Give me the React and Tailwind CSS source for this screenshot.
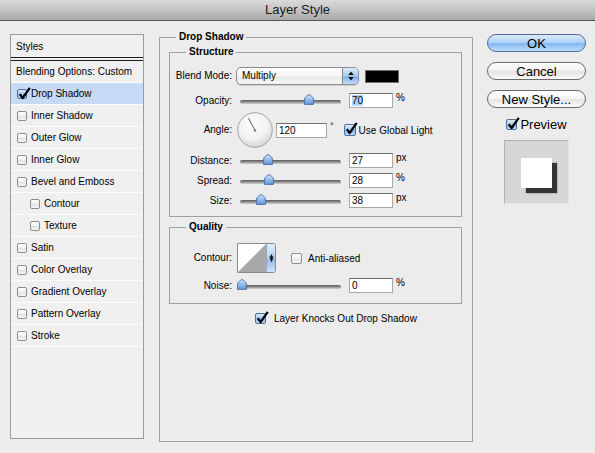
import React from "react";

// Aqua style checkbox; the check mark pokes out past the top-right corner
function Checkbox({ checked = false, className = "w-[10px] h-[10px]" }) {
  return (
    <span
      className={
        "relative inline-block shrink-0 rounded-[2px] border " +
        className +
        (checked
          ? " border-[#4f6f9c] bg-[linear-gradient(to_bottom,#dbe9fb_0%,#a9c9f1_50%,#84b1ea_55%,#bcd8f8_100%)]"
          : " border-[#8d8d8d] bg-[linear-gradient(to_bottom,#ffffff_0%,#f2f2f2_50%,#e2e2e2_55%,#f7f7f7_100%)]")
      }
    >
      {checked && (
        <svg
          className="absolute left-[0px] top-[-3px] w-[13px] h-[13px] overflow-visible"
          viewBox="0 0 13 13"
        >
          <path
            d="M1.8 7.2 L4.6 11 L11.8 0.8"
            fill="none"
            stroke="#000"
            strokeWidth="2.2"
            strokeLinejoin="round"
          />
        </svg>
      )}
    </span>
  );
}

function TextBox({ className = "w-[44px]", children }) {
  return (
    <div
      className={
        "h-[15px] shrink-0 bg-white border border-[#a8a8a8] border-t-[#6e6e6e] pl-[2px] text-[10px] leading-[13px] " +
        className
      }
    >
      {children}
    </div>
  );
}

// Horizontal slider: grooved track with a blue pointed thumb
function Slider({ thumbLeft }) {
  return (
    <div className="relative ml-[8px] w-[101px] h-[15px] shrink-0 flex items-center">
      <div className="mt-[3px] h-[4px] w-full rounded-full bg-[linear-gradient(to_bottom,#5a5a5a_0%,#8d8d8d_50%,#d6d6d6_100%)]" />
      <svg
        className={"absolute top-[1px] w-[10px] h-[11px] " + thumbLeft}
        viewBox="0 0 10 11"
      >
        <defs>
          <linearGradient id="thumbFill" x1="0" y1="0" x2="0" y2="1">
            <stop offset="0" stopColor="#d5e6fb" />
            <stop offset="0.5" stopColor="#93bdee" />
            <stop offset="1" stopColor="#5e95dc" />
          </linearGradient>
        </defs>
        <path
          d="M5 0.6 C6.2 0.6 9.4 3.6 9.4 5 L9.4 10.4 L0.6 10.4 L0.6 5 C0.6 3.6 3.8 0.6 5 0.6 Z"
          fill="url(#thumbFill)"
          stroke="#4a6c9c"
          strokeWidth="0.9"
        />
      </svg>
    </div>
  );
}

function Label({ children }) {
  return (
    <div className="w-[62px] shrink-0 text-right text-[10px] leading-[12px]">
      {children}
    </div>
  );
}

function Unit({ children }) {
  return (
    <div className="ml-[3px] self-start text-[10px] leading-[10px]">
      {children}
    </div>
  );
}

function SliderRow({ label, thumbLeft, value, unit, className = "mt-[5px]" }) {
  return (
    <div className={"flex items-center h-[15px] " + className}>
      <Label>{label}</Label>
      <Slider thumbLeft={thumbLeft} />
      <div className="ml-[8px]">
        <TextBox>{value}</TextBox>
      </div>
      <Unit>{unit}</Unit>
    </div>
  );
}

function AngleDial() {
  return (
    <svg className="ml-[5px] w-[36px] h-[36px] shrink-0" viewBox="0 0 36 36">
      <defs>
        <radialGradient id="dialFill" cx="0.45" cy="0.35" r="0.7">
          <stop offset="0" stopColor="#ffffff" />
          <stop offset="0.6" stopColor="#f1f1f1" />
          <stop offset="1" stopColor="#cfcfcf" />
        </radialGradient>
      </defs>
      <circle cx="18" cy="18" r="17.3" fill="url(#dialFill)" stroke="#9c9c9c" strokeWidth="0.9" />
      <line x1="18" y1="18.5" x2="11.5" y2="6.2" stroke="#5a5a5a" strokeWidth="1" />
      <circle cx="18" cy="18.5" r="1.3" fill="#7a7a7a" />
    </svg>
  );
}

function PopupButton({ children }) {
  return (
    <div className="ml-[4px] w-[123px] h-[18px] shrink-0 flex rounded-[5px] border border-[#8c8c8c] bg-[linear-gradient(to_bottom,#ffffff_0%,#f6f6f6_50%,#e9e9e9_55%,#f5f5f5_100%)] shadow-[0_1px_0_#d0d0d0]">
      <div className="flex-1 pl-[5px] text-[10px] leading-[16px]">{children}</div>
      <div className="w-[16px] flex items-center justify-center rounded-r-[4px] border-l border-[#8c8c8c] bg-[linear-gradient(to_bottom,#dceafb_0%,#a9caf1_50%,#84b1ea_55%,#c3dcf9_100%)]">
        <svg className="w-[8px] h-[12px]" viewBox="0 0 8 12">
          <path d="M1.2 5 L4 1.5 L6.8 5 Z" fill="#111" />
          <path d="M1.2 7 L4 10.5 L6.8 7 Z" fill="#111" />
        </svg>
      </div>
    </div>
  );
}

function ContourSwatch() {
  return (
    <div className="ml-[5px] w-[39px] h-[30px] shrink-0 flex border border-[#8a8a8a] rounded-r-[3px] bg-white">
      <svg className="flex-1 h-full" viewBox="0 0 28 28" preserveAspectRatio="none">
        <rect x="0" y="0" width="28" height="28" fill="#ffffff" />
        <path d="M0 28 L28 0 L28 28 Z" fill="#a9a9a9" />
      </svg>
      <div className="w-[9px] flex items-center justify-center rounded-r-[2px] border-l border-[#9aa9bd] bg-[linear-gradient(to_bottom,#e3eefc_0%,#b4d0f3_50%,#92b9ec_55%,#cfe2fa_100%)]">
        <svg className="w-[5px] h-[9px]" viewBox="0 0 5 9">
          <path d="M0.3 2.5 L4.7 2.5 L2.5 8.5 Z" fill="#111" />
          <rect x="1.8" y="0.5" width="1.4" height="3" fill="#111" />
        </svg>
      </div>
    </div>
  );
}

const styleItems = [
  { name: "Drop Shadow", checked: true, selected: true },
  { name: "Inner Shadow" },
  { name: "Outer Glow" },
  { name: "Inner Glow" },
  { name: "Bevel and Emboss" },
  { name: "Contour", sub: true },
  { name: "Texture", sub: true },
  { name: "Satin" },
  { name: "Color Overlay" },
  { name: "Gradient Overlay" },
  { name: "Pattern Overlay" },
  { name: "Stroke" },
];

function StylesList() {
  return (
    <div className="mt-[3px] w-[134px] h-[405px] shrink-0 flex flex-col border border-[#9b9b9b] bg-[#f0f0f0] text-[10px]">
      <div className="h-[22px] flex items-center pl-[5px]">Styles</div>
      <div className="h-[4px] border-y border-[#1e1e1e]" />
      <div className="h-[22px] flex items-center pl-[5px] border-b border-[#fcfcfc]">
        Blending Options: Custom
      </div>
      {styleItems.map((item) => (
        <div
          key={item.name}
          className={
            "h-[22px] flex items-center border-b border-[#fcfcfc] " +
            (item.sub ? "pl-[19px] " : "pl-[6px] ") +
            (item.selected ? "bg-[#c6daf5]" : "")
          }
        >
          <Checkbox checked={item.checked} />
          <span className="ml-[4px]">{item.name}</span>
        </div>
      ))}
    </div>
  );
}

function Legend({ children, className = "ml-[16px]" }) {
  return (
    <legend className={"px-[3px] text-[10px] leading-[12px] font-bold " + className}>
      {children}
    </legend>
  );
}

function DropShadowPanel() {
  return (
    <fieldset className="ml-[15px] w-[314px] h-[411px] shrink-0 border border-[#a0a0a0] pl-[9px] pr-[10px]">
      <Legend className="ml-[7px]">Drop Shadow</Legend>

      <fieldset className="mt-[3px] border border-[#a0a0a0] pb-[8px]">
        <Legend>Structure</Legend>

        <div className="mt-[9px] h-[18px] flex items-center">
          <Label>Blend Mode:</Label>
          <PopupButton>Multiply</PopupButton>
          <div className="ml-[6px] w-[34px] h-[13px] bg-black border border-[#707070]" />
        </div>

        <div className="mt-[8px] h-[15px] flex items-center">
          <Label>Opacity:</Label>
          <Slider thumbLeft="left-[64px]" />
          <div className="ml-[8px]">
            <TextBox>
              <span className="bg-[#b5d5ff]">70</span>
            </TextBox>
          </div>
          <Unit>%</Unit>
        </div>

        <div className="mt-[4px] h-[36px] flex items-center">
          <Label>Angle:</Label>
          <AngleDial />
          <div className="ml-[3px]">
            <TextBox className="w-[51px]">120</TextBox>
          </div>
          <div className="ml-[3px] self-start mt-[10px] text-[9px] leading-[9px]">°</div>
          <div className="ml-[10px] flex items-center">
            <Checkbox checked className="w-[12px] h-[12px]" />
            <span className="ml-[3px] text-[10px]">Use Global Light</span>
          </div>
        </div>

        <SliderRow label="Distance:" thumbLeft="left-[23px]" value="27" unit="px" />
        <SliderRow label="Spread:" thumbLeft="left-[24px]" value="28" unit="%" />
        <SliderRow label="Size:" thumbLeft="left-[16px]" value="38" unit="px" />
      </fieldset>

      <fieldset className="mt-[4px] border border-[#a0a0a0] pb-[10px]">
        <Legend>Quality</Legend>

        <div className="mt-[10px] h-[30px] flex items-center">
          <Label>Contour:</Label>
          <ContourSwatch />
          <div className="ml-[15px] flex items-center">
            <Checkbox className="w-[11px] h-[11px]" />
            <span className="ml-[6px] text-[10px]">Anti-aliased</span>
          </div>
        </div>

        <SliderRow label="Noise:" thumbLeft="left-[-3px]" value="0" unit="%" />
      </fieldset>

      <div className="mt-[7px] h-[14px] flex items-center pl-[86px]">
        <Checkbox checked className="w-[11px] h-[11px]" />
        <span className="ml-[8px] text-[10px]">Layer Knocks Out Drop Shadow</span>
      </div>
    </fieldset>
  );
}

function AquaButton({ primary = false, children }) {
  return (
    <div
      className={
        "w-[99px] h-[18px] rounded-full border flex items-center justify-center text-[13px] leading-none " +
        (primary
          ? "border-[#4d6c99] bg-[linear-gradient(to_bottom,#dcebfc_0%,#b2d3f6_45%,#84b6ef_55%,#bfe0fd_100%)]"
          : "border-[#6a6a6a] bg-[linear-gradient(to_bottom,#ffffff_0%,#f4f4f4_45%,#e4e4e4_55%,#fbfbfb_100%)]")
      }
    >
      {children}
    </div>
  );
}

function SideColumn() {
  return (
    <div className="ml-[14px] mt-[3px] w-[99px] shrink-0 flex flex-col items-center">
      <AquaButton primary>OK</AquaButton>
      <div className="mt-[10px]">
        <AquaButton>Cancel</AquaButton>
      </div>
      <div className="mt-[10px]">
        <AquaButton>New Style...</AquaButton>
      </div>
      <div className="mt-[10px] h-[13px] flex items-center">
        <Checkbox checked className="w-[11px] h-[11px]" />
        <span className="ml-[3px] text-[13px] leading-none">Preview</span>
      </div>
      <div className="mt-[9px] w-[65px] h-[64px] bg-[#d6d6d6] border border-[#e2e2e2] border-t-[#b3b3b3] border-l-[#b3b3b3] pl-[16px] pt-[17px]">
        <div className="w-[31px] h-[30px] bg-white shadow-[5px_5px_1px_#343434]" />
      </div>
    </div>
  );
}

export default function App() {
  return (
    <div className="w-[595px] h-[453px] overflow-hidden flex flex-col bg-[#ececec] text-black font-['Liberation_Sans',Arial,sans-serif]">
      <div className="h-[21px] shrink-0 flex items-center justify-center border-b border-[#585858] bg-[linear-gradient(to_bottom,#dadada_0%,#c4c4c4_50%,#a8a8a8_100%)] text-[13px] text-[#1b1b1b]">
        Layer Style
      </div>
      <div className="flex items-start pt-[10px] pl-[10px]">
        <StylesList />
        <DropShadowPanel />
        <SideColumn />
      </div>
    </div>
  );
}
